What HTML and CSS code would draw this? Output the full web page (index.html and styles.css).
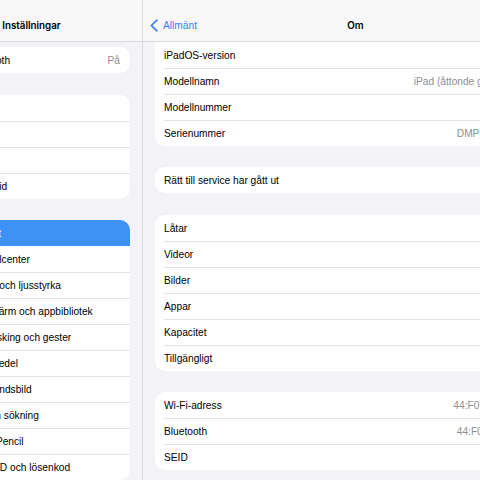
FILE: index.html
```html
<!DOCTYPE html>
<html lang="sv">
<head>
<meta charset="utf-8">
<title>Om</title>
<link rel="stylesheet" href="styles.css">
</head>
<body>
<div class="app">
  <aside class="sidebar">
    <div class="sidebar-inner">
      <header class="bar bar-side"><span class="bar-title">Inställningar</span></header>
      <div class="side-list">
        <section class="group">
          <div class="srow"><div class="srow-body"><span>Bluetooth</span><span class="svalue">På</span></div></div>
        </section>
        <section class="group sg2">
          <div class="srow"><div class="srow-body"><span>Notiser</span></div></div>
          <div class="srow"><div class="srow-body"><span>Ljud</span></div></div>
          <div class="srow"><div class="srow-body"><span>Fokus</span></div></div>
          <div class="srow"><div class="srow-body"><span>Skärmtid</span></div></div>
        </section>
        <section class="group sg3">
          <div class="srow selected"><div class="srow-body"><span>Allmänt</span></div></div>
          <div class="srow"><div class="srow-body"><span>Kontrollcenter</span></div></div>
          <div class="srow"><div class="srow-body"><span>Skärm och ljusstyrka</span></div></div>
          <div class="srow"><div class="srow-body"><span>Hemskärm och appbibliotek</span></div></div>
          <div class="srow"><div class="srow-body"><span>Multitasking och gester</span></div></div>
          <div class="srow"><div class="srow-body"><span>Hjälpmedel</span></div></div>
          <div class="srow"><div class="srow-body"><span>Bakgrundsbild</span></div></div>
          <div class="srow"><div class="srow-body"><span>Siri och sökning</span></div></div>
          <div class="srow"><div class="srow-body"><span>Apple Pencil</span></div></div>
          <div class="srow"><div class="srow-body"><span>Touch ID och lösenkod</span></div></div>
        </section>
      </div>
    </div>
  </aside>
  <main class="detail">
    <header class="bar bar-detail">
      <div class="back">
        <svg class="chev" width="8" height="13" viewBox="0 0 8 13"><path d="M6.8 1.2 L1.4 6.5 L6.8 11.8" fill="none" stroke="#3a7ff6" stroke-width="1.7" stroke-linecap="round" stroke-linejoin="round"/></svg>
        <span>Allmänt</span>
      </div>
      <span class="bar-title">Om</span>
      <span></span>
    </header>
    <div class="detail-list">
      <section class="dgroup first">
        <div class="drow"><div class="drow-body"><span>iPadOS-version</span><span class="dvalue">15.7</span></div></div>
        <div class="drow"><div class="drow-body"><span>Modellnamn</span><span class="dvalue">iPad (åttonde generationen)</span></div></div>
        <div class="drow"><div class="drow-body"><span>Modellnummer</span><span class="dvalue">MYLA2KS/A</span></div></div>
        <div class="drow"><div class="drow-body"><span>Serienummer</span><span class="dvalue">DMPF8K2HQ1GC</span></div></div>
      </section>
      <section class="dgroup g2">
        <div class="drow"><div class="drow-body"><span>Rätt till service har gått ut</span></div></div>
      </section>
      <section class="dgroup g3">
        <div class="drow"><div class="drow-body"><span>Låtar</span><span class="dvalue">0</span></div></div>
        <div class="drow"><div class="drow-body"><span>Videor</span><span class="dvalue">0</span></div></div>
        <div class="drow"><div class="drow-body"><span>Bilder</span><span class="dvalue">0</span></div></div>
        <div class="drow"><div class="drow-body"><span>Appar</span><span class="dvalue">12</span></div></div>
        <div class="drow"><div class="drow-body"><span>Kapacitet</span><span class="dvalue">32 GB</span></div></div>
        <div class="drow"><div class="drow-body"><span>Tillgängligt</span><span class="dvalue">18,2 GB</span></div></div>
      </section>
      <section class="dgroup g4">
        <div class="drow"><div class="drow-body"><span>Wi-Fi-adress</span><span class="dvalue">44:F0:9E:5A:3C:21</span></div></div>
        <div class="drow"><div class="drow-body"><span>Bluetooth</span><span class="dvalue">44:F0:91:51:1F:21</span></div></div>
        <div class="drow"><div class="drow-body"><span>SEID</span></div></div>
      </section>
    </div>
  </main>
</div>
</body>
</html>
```

FILE: styles.css
```css
* { box-sizing: border-box; }
html, body { margin: 0; padding: 0; }
body {
  width: 480px;
  height: 480px;
  overflow: hidden;
  background: #f2f2f7;
  font-family: "Liberation Sans", Arial, sans-serif;
  font-size: 10.2px;
  color: #000;
}
.app { display: flex; height: 480px; }

.bar {
  height: 42px;
  padding-top: 10px;
  border-bottom: 1px solid #d9d9dc;
  background: #f8f8f8;
  display: flex;
  align-items: center;
}
.bar-title {
  font-family: Inter, "Liberation Sans", sans-serif;
  font-weight: 600;
  font-size: 9.8px;
}

/* sidebar */
.sidebar {
  flex: none;
  width: 143px;
  overflow: hidden;
  border-right: 1px solid #dcdce0;
}
.sidebar-inner { width: 221px; margin-left: -79px; }
.bar-side { justify-content: center; }
.side-list {
  padding: 5px 12px 0 12px;
  display: flex;
  flex-direction: column;
}
.group { background: #fff; border-radius: 10px; overflow: hidden; }
.sg2 { margin-top: 22px; }
.sg3 { margin-top: 21px; }
.srow { height: 26px; padding-left: 34px; display: flex; }
.srow-body {
  flex: 1;
  display: flex;
  align-items: center;
  justify-content: space-between;
  padding-right: 10px;
  border-top: 1px solid #e4e4e8;
  white-space: nowrap;
}
.srow:first-child .srow-body { border-top: none; }
.srow.selected { background: #3e92f6; color: #fff; }
.srow.selected + .srow .srow-body { border-top-color: transparent; }
.svalue { color: #8e8e93; }

/* detail */
.detail { flex: none; width: 418px; }
.bar-detail {
  display: grid;
  grid-template-columns: 1fr auto 1fr;
  padding-left: 7px;
}
.back { display: flex; align-items: center; gap: 5px; color: #3a7ff6; }
.chev { display: block; }
.detail-list { padding: 0 12px; display: flex; flex-direction: column; }
.dgroup { background: #fff; border-radius: 10px; }
.dgroup.first { border-radius: 0 0 10px 10px; }
.g2 { margin-top: 21px; }
.g3 { margin-top: 22px; }
.g4 { margin-top: 21px; }
.drow { height: 26px; padding-left: 9px; display: flex; }
.drow-body {
  flex: 1;
  display: flex;
  align-items: center;
  justify-content: space-between;
  padding-right: 9px;
  border-top: 1px solid #e4e4e8;
  white-space: nowrap;
}
.drow:first-child .drow-body { border-top: none; }
.dvalue { color: #8e8e93; }
```
